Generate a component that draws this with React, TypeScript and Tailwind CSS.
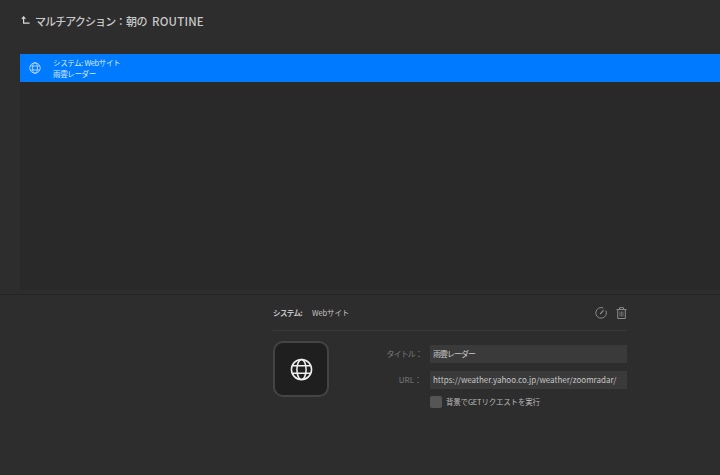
const font = { fontFamily: '"Noto Sans CJK JP", "Noto Sans", sans-serif' };

function GlobeIcon({ size, stroke, width }: { size: number; stroke: string; width: number }) {
  return (
    <svg width={size} height={size} viewBox="0 0 24 24" fill="none" stroke={stroke} strokeWidth={width}>
      <circle cx="12" cy="12" r="10.5" />
      <ellipse cx="12" cy="12" rx="4.8" ry="10.5" />
      <path d="M2.6 8H21.4M2.6 16H21.4" />
    </svg>
  );
}

function BackIcon() {
  return (
    <svg width="9" height="9" viewBox="0 0 9 9" fill="none" stroke="#d8d8d8" strokeWidth="1.2">
      <path d="M0.8 2.8 2.6 0.9 4.4 2.8" />
      <path d="M2.6 1.2V7.2H8.6" />
    </svg>
  );
}

function GaugeIcon() {
  return (
    <svg width="12" height="12" viewBox="0 0 12 12" fill="none" stroke="#8a8a8a" strokeWidth="1">
      <path d="M8.4 1.1A5.3 5.3 0 1 0 10.9 3.6" />
      <path d="M5.2 7 8.6 3.2" strokeWidth="1.2" />
    </svg>
  );
}

function TrashIcon() {
  return (
    <svg width="11" height="12" viewBox="0 0 11 12" fill="none" stroke="#8a8a8a" strokeWidth="1">
      <path d="M0.5 2.5H10.5" />
      <path d="M3.5 2.5V0.7H7.5V2.5" />
      <path d="M1.7 2.5V11.5H9.3V2.5" />
      <path d="M4 4.5V9.5M5.5 4.5V9.5M7 4.5V9.5" strokeWidth="0.7" />
    </svg>
  );
}

export default function App() {
  return (
    <div className="flex h-[475px] w-[720px] flex-col overflow-hidden bg-[#2d2d2d]" style={font}>
      {/* Title */}
      <div className="flex h-[54px] shrink-0 items-start pl-[21px] pt-[13px]">
        <div className="mt-[3px]">
          <BackIcon />
        </div>
        <h1 className="ml-[5px] flex items-baseline whitespace-nowrap text-[11px] font-medium leading-[17px] text-[#c8c8c8]">
          <span className="w-[91px] tracking-[-0.9px]">マルチアクション：</span>
          <span className="w-[26px] tracking-[-0.6px]">朝の</span>
          <span className="text-[11.5px] tracking-[0.2px]">ROUTINE</span>
        </h1>
      </div>

      {/* Action list */}
      <div className="ml-[20px] h-[236px] shrink-0 bg-[#292929]">
        <div className="flex h-[28px] items-center bg-[#007aff] pl-[9px]">
          <GlobeIcon size={12} stroke="#d5e8ff" width={1.5} />
          <div className="ml-[12px] text-[7.5px] leading-[11px] tracking-[-0.35px] text-[#d9ebff]">
            <div>システム: Webサイト</div>
            <div>雨雲レーダー</div>
          </div>
        </div>
      </div>

      {/* Inspector */}
      <div className="mt-[4px] flex-1 border-t border-[#242424] pl-[273px]">
        <div className="w-[354px]">
          <div className="flex h-[36px] items-center justify-between border-b border-[#383838]">
            <div className="flex items-center text-[7.5px] text-[#c4c4c4]">
              <span className="w-[39px] font-bold tracking-[-0.6px]">システム:</span>
              <span className="tracking-[-0.1px]">Webサイト</span>
            </div>
            <div className="flex items-center gap-[9px]">
              <GaugeIcon />
              <TrashIcon />
            </div>
          </div>

          <div className="mt-[10px] flex">
            <div className="flex h-[56px] w-[56px] shrink-0 items-center justify-center rounded-[10px] border-2 border-[#444444] bg-[#1f1f1f]">
              <GlobeIcon size={23} stroke="#f0f0f0" width={1.6} />
            </div>
            <div className="ml-[50px] mt-[4px] min-w-0 flex-1 text-[8px]">
              <div className="flex items-center">
                <span className="w-[51px] shrink-0 whitespace-nowrap pr-[8px] text-right tracking-[-0.9px] text-[#7c7c7c]">タイトル：</span>
                <div className="flex h-[18px] flex-1 items-center bg-[#3a3a3a] px-[3px] tracking-[-1px] text-[#c8c8c8]">雨雲レーダー</div>
              </div>
              <div className="mt-[8px] flex items-center">
                <span className="w-[51px] shrink-0 pr-[8px] text-right text-[#7c7c7c]">URL：</span>
                <div className="flex h-[18px] min-w-0 flex-1 items-center whitespace-nowrap bg-[#3a3a3a] px-[3px] text-[#c8c8c8]">
                  https://weather.yahoo.co.jp/weather/zoomradar/
                </div>
              </div>
              <div className="mt-[7px] flex items-center pl-[51px]">
                <div className="h-[12px] w-[12px] rounded-[2px] bg-[#555555]" />
                <span className="ml-[4px] whitespace-nowrap text-[7.5px] tracking-[-0.2px] text-[#b8b8b8]">背景でGETリクエストを実行</span>
              </div>
            </div>
          </div>
        </div>
      </div>
    </div>
  );
}
